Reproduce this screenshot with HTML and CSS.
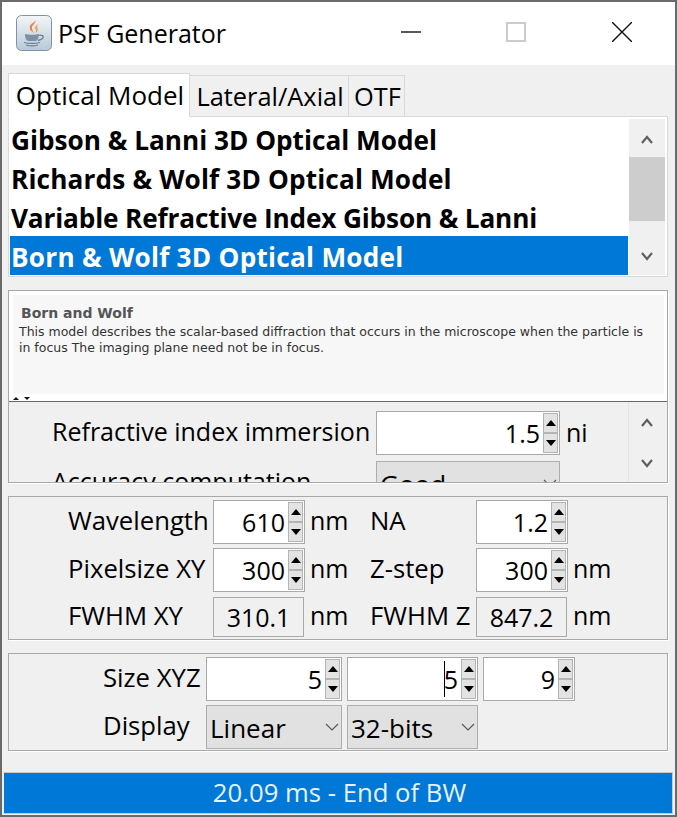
FILE: index.html
```html
<!DOCTYPE html>
<html lang="en">
<head>
    <meta charset="UTF-8">
    <title>PSF Generator</title>
    <link rel="stylesheet" href="styles.css">
</head>
<body>
<div class="window">

    <!-- Title bar -->
    <div class="titlebar">
        <svg class="appicon" viewBox="0 0 36 36">
            <defs>
                <linearGradient id="tile" x1="0" y1="0" x2="0" y2="1">
                    <stop offset="0" stop-color="#f4f6f8"/>
                    <stop offset="1" stop-color="#b9c9d8"/>
                </linearGradient>
            </defs>
            <rect x="0.5" y="0.5" width="35" height="35" rx="5" fill="url(#tile)" stroke="#7f93a6"/>
            <path d="M19 5c2 3-4 5-3 9 .4 2 1.500 3 2 4-3-2-5-4-4-7 1-3 5-3 5-6z" fill="#e8843a"/>
            <path d="M23 9c-3 1-4.500 3-3.500 5 .5 1 .8 2 .3 4 2.500-2 2.200-4 1.500-5.500-.6-1.300.2-2.500 1.700-3.500z" fill="#ee9a55"/>
            <path d="M9 19c3 1 11 1 14 0v1c-1 4-1 5-3 6h-8c-2-1-3-3-3-7z" fill="#7d91a3"/>
            <path d="M23 20.500c3-1 5 .5 4 2.500-.7 1.400-3 2-5 2.500" fill="none" stroke="#6a7f92" stroke-width="1.300"/>
            <path d="M8 27.500c4 1.200 12 1.200 16 0M10 30c3 .9 9 .9 12 0" fill="none" stroke="#6a7f92" stroke-width="1.300"/>
        </svg>
        <span class="title">PSF Generator</span>
        <div class="winbtns">
            <svg class="winbtn" viewBox="0 0 20 20"><path d="M0 10h20" stroke="#111" stroke-width="1.400"/></svg>
            <svg class="winbtn" viewBox="0 0 20 20"><rect x="1" y="1" width="18" height="18" fill="none" stroke="#ccc" stroke-width="2"/></svg>
            <svg class="winbtn winbtn-close" viewBox="0 0 20 20"><path d="M0 0l20 20M20 0L0 20" stroke="#111" stroke-width="1.400"/></svg>
        </div>
    </div>

    <div class="content">

        <!-- Tabs -->
        <div class="tabs">
            <div class="tab tab-active">Optical Model</div>
            <div class="tab tab-lateral">Lateral/Axial</div>
            <div class="tab tab-otf">OTF</div>
        </div>

        <!-- Model list -->
        <div class="listbox">
            <ul class="models">
                <li>Gibson &amp; Lanni 3D Optical Model</li>
                <li class="model-richards">Richards &amp; Wolf 3D Optical Model</li>
                <li class="model-variable">Variable Refractive Index Gibson &amp; Lanni</li>
                <li class="model-born selected">Born &amp; Wolf 3D Optical Model</li>
            </ul>
            <div class="scrollbar scrollbar-list">
                <svg class="chev" viewBox="0 0 12 9"><path d="M1 8l5-6 5 6" fill="none" stroke="#606060" stroke-width="2.200"/></svg>
                <div class="thumb"></div>
                <svg class="chev" viewBox="0 0 12 9"><path d="M1 1l5 6 5-6" fill="none" stroke="#606060" stroke-width="2.200"/></svg>
            </div>
        </div>

        <!-- Description and parameters split pane -->
        <div class="split">
            <div class="desc-wrap">
                <div class="desc">
                    <h4>Born and Wolf</h4>
                    <p>This model describes the scalar-based diffraction that occurs in the microscope when the particle is in focus The imaging plane need not be in focus.</p>
                </div>
                <div class="divider-arrows">
                    <svg viewBox="0 0 6 3"><path d="M3 0l3 3H0z" fill="#111"/></svg>
                    <svg viewBox="0 0 6 3"><path d="M0 0h6L3 3z" fill="#111"/></svg>
                </div>
            </div>
            <div class="params">
                <div class="params-view">
                    <div class="params-row">
                        <span class="params-label">Refractive index immersion</span>
                        <div class="spin spin-ni">
                            <span class="spin-value">1.5</span>
                            <div class="spin-btns">
                                <div class="spin-btn"><i class="tri-up"></i></div>
                                <div class="spin-btn"><i class="tri-down"></i></div>
                            </div>
                        </div>
                        <span class="unit">ni</span>
                    </div>
                    <div class="params-row">
                        <span class="params-label">Accuracy computation</span>
                        <div class="combo combo-accuracy">
                            <span>Good</span>
                            <svg class="combo-chev" viewBox="0 0 14 8"><path d="M1 1l6 6 6-6" fill="none" stroke="#555" stroke-width="1.100"/></svg>
                        </div>
                    </div>
                </div>
                <div class="scrollbar scrollbar-params">
                    <svg class="chev" viewBox="0 0 12 9"><path d="M1 8l5-6 5 6" fill="none" stroke="#606060" stroke-width="2.200"/></svg>
                    <svg class="chev" viewBox="0 0 12 9"><path d="M1 1l5 6 5-6" fill="none" stroke="#606060" stroke-width="2.200"/></svg>
                </div>
            </div>
        </div>

        <!-- Optics -->
        <div class="panel optics">
            <span class="lbl">Wavelength</span>
            <div class="spin">
                <span class="spin-value">610</span>
                <div class="spin-btns">
                    <div class="spin-btn"><i class="tri-up"></i></div>
                    <div class="spin-btn"><i class="tri-down"></i></div>
                </div>
            </div>
            <span class="unit">nm</span>
            <span class="lbl">NA</span>
            <div class="spin">
                <span class="spin-value">1.2</span>
                <div class="spin-btns">
                    <div class="spin-btn"><i class="tri-up"></i></div>
                    <div class="spin-btn"><i class="tri-down"></i></div>
                </div>
            </div>
            <span class="unit"></span>

            <span class="lbl">Pixelsize XY</span>
            <div class="spin">
                <span class="spin-value">300</span>
                <div class="spin-btns">
                    <div class="spin-btn"><i class="tri-up"></i></div>
                    <div class="spin-btn"><i class="tri-down"></i></div>
                </div>
            </div>
            <span class="unit">nm</span>
            <span class="lbl">Z-step</span>
            <div class="spin">
                <span class="spin-value">300</span>
                <div class="spin-btns">
                    <div class="spin-btn"><i class="tri-up"></i></div>
                    <div class="spin-btn"><i class="tri-down"></i></div>
                </div>
            </div>
            <span class="unit">nm</span>

            <span class="lbl">FWHM XY</span>
            <div class="readout">310.1</div>
            <span class="unit">nm</span>
            <span class="lbl">FWHM Z</span>
            <div class="readout">847.2</div>
            <span class="unit">nm</span>
        </div>

        <!-- Size and display -->
        <div class="panel sizes">
            <span class="lbl">Size XYZ</span>
            <div class="spin">
                <span class="spin-value">5</span>
                <div class="spin-btns">
                    <div class="spin-btn"><i class="tri-up"></i></div>
                    <div class="spin-btn"><i class="tri-down"></i></div>
                </div>
            </div>
            <div class="spin spin-second">
                <span class="spin-value caret">5</span>
                <div class="spin-btns">
                    <div class="spin-btn"><i class="tri-up"></i></div>
                    <div class="spin-btn"><i class="tri-down"></i></div>
                </div>
            </div>
            <div class="spin spin-third">
                <span class="spin-value">9</span>
                <div class="spin-btns">
                    <div class="spin-btn"><i class="tri-up"></i></div>
                    <div class="spin-btn"><i class="tri-down"></i></div>
                </div>
            </div>

            <span class="lbl">Display</span>
            <div class="combo">
                <span>Linear</span>
                <svg class="combo-chev" viewBox="0 0 14 8"><path d="M1 1l6 6 6-6" fill="none" stroke="#555" stroke-width="1.100"/></svg>
            </div>
            <div class="combo spin-second">
                <span>32-bits</span>
                <svg class="combo-chev" viewBox="0 0 14 8"><path d="M1 1l6 6 6-6" fill="none" stroke="#555" stroke-width="1.100"/></svg>
            </div>
        </div>

        <!-- Status -->
        <div class="status">20.09 ms - End of BW</div>
    </div>
</div>
</body>
</html>
```

FILE: styles.css
```css
* {
    box-sizing: border-box;
}
body {
    margin: 0;
    background-color: #6a6a6a;
    font-family: "Open Sans", "Noto Sans", sans-serif;
    color: #000;
}
.window {
    width: 673px;
    height: 813px;
    margin: 2px;
    display: flex;
    flex-direction: column;
    background-color: #f0f0f0;
}

/* title bar */
.titlebar {
    height: 63px;
    flex: none;
    background: #fff;
    display: flex;
    align-items: center;
    padding-left: 14px;
}
.appicon {
    width: 36px;
    height: 36px;
    margin-top: -2px;
}
.title {
    margin-left: 6px;
    font-size: 25px;
    margin-top: -1px;
}
.winbtns {
    margin-left: auto;
    display: flex;
    gap: 85px;
    padding-right: 43px;
    margin-top: -3px;
}
.winbtn {
    width: 20px;
    height: 20px;
}
.winbtn-close {
    margin-left: 1px;
}

.content {
    flex: 1;
    display: flex;
    flex-direction: column;
    padding: 7px 6px 0 6px;
    min-height: 0;
}

/* tabs */
.tabs {
    display: flex;
    align-items: flex-end;
    height: 44px;
    flex: none;
    position: relative;
    z-index: 1;
}
.tab {
    font-size: 25.400px;
    line-height: 40px;
    height: 41px;
    padding-left: 2px;
    border: 1px solid #d9d9d9;
    border-bottom: none;
    border-left: none;
    text-align: center;
    white-space: nowrap;
}
.tab-active {
    width: 182px;
    height: 44px;
    background: #fff;
    border-left: 1px solid #d9d9d9;
    font-size: 26px;
    line-height: 42px;
    border-bottom: 1px solid #fff;
    margin-bottom: -1px;
}
.tab-lateral {
    width: 159px;
}
.tab-otf {
    width: 56px;
}

/* list */
.listbox {
    width: 660px;
    height: 161px;
    flex: none;
    border: 1px solid #d9d9d9;
    background: #fff;
    display: flex;
    padding: 0 1px 1px 1px;
}
.models {
    list-style: none;
    margin: 0;
    padding: 2px 0 0 0;
    width: 618px;
    flex: none;
    font-weight: 700;
    font-size: 26.200px;
}
.models li {
    height: 39px;
    line-height: 43px;
    padding-left: 1px;
    white-space: nowrap;
}
.models .model-richards {
    letter-spacing: 0.15px;
}
.models .model-variable {
    letter-spacing: -0.15px;
}
.models .model-born {
    letter-spacing: 0.25px;
}
.models .selected {
    background: #0078d7;
    color: #fff;
}
.scrollbar {
    display: flex;
    flex-direction: column;
    align-items: center;
    background: #f0f0f0;
}
.scrollbar-list {
    width: 36px;
    margin-left: 1px;
    margin-top: 2px;
    padding-top: 16px;
}
.chev {
    width: 12px;
    height: 9px;
    flex: none;
}
.thumb {
    width: 36px;
    height: 64px;
    background: #cdcdcd;
    flex: none;
    margin: 13px 0 31px 0;
}

/* split pane */
.split {
    width: 660px;
    height: 193px;
    flex: none;
    margin-top: 13px;
    border: 1px solid #a9a9a9;
    box-shadow: 1px 1px 0 #fff;
    display: flex;
    flex-direction: column;
    overflow: hidden;
}
.desc-wrap {
    height: 111px;
    flex: none;
    background: #fff;
    border-bottom: 1px solid #666;
    position: relative;
    padding: 4px 3px 0 4px;
}
.desc {
    height: 99px;
    background: #f7f7f7;
    font-family: "DejaVu Sans", Verdana, sans-serif;
    padding: 7px 20px 0 6px;
    color: #333;
}
.desc h4 {
    margin: 0 0 0 2px;
    font-size: 14px;
    line-height: 22px;
    color: #555;
}
.desc p {
    margin: 0;
    font-size: 12.500px;
    line-height: 16px;
}
.divider-arrows {
    display: flex;
    gap: 5px;
    margin-top: 3px;
    height: 3px;
}
.divider-arrows svg {
    width: 6px;
    height: 3px;
}
.params {
    flex: 1;
    display: flex;
    min-height: 0;
    overflow: hidden;
}
.params-view {
    width: 619px;
    flex: none;
    padding-top: 9px;
}
.params-row {
    display: flex;
    align-items: center;
    height: 44px;
    margin-bottom: 6px;
}
.params-label {
    width: 367px;
    padding-left: 43px;
    margin-bottom: 4px;
    font-size: 25px;
    flex: none;
    white-space: nowrap;
}
.spin-ni {
    width: 184px;
    flex: none;
}
.params-row .unit {
    margin-left: 6px;
    margin-bottom: 2px;
}
.combo-accuracy {
    width: 184px;
    flex: none;
}
.scrollbar-params {
    width: 37px;
    flex: none;
    border-left: 1px solid #e4e4e4;
    padding-top: 16px;
    gap: 32px;
}

/* spinners */
.spin {
    height: 44px;
    border: 1px solid #a9a9a9;
    background: #fff;
    display: flex;
    align-items: stretch;
    padding: 1px;
}
.spin-value {
    flex: 1;
    text-align: right;
    font-size: 25px;
    line-height: 41px;
    padding-right: 3px;
}
.caret {
    position: relative;
}
.caret::before {
    content: "";
    position: absolute;
    top: 2px;
    bottom: 2px;
    right: 16px;
    width: 1px;
    background: #000;
}
.spin-btns {
    width: 15px;
    flex: none;
    display: flex;
    flex-direction: column;
    border: 1px solid #b4b4b4;
    background: #e3e3e3;
}
.spin-btn {
    flex: 1;
    display: flex;
    align-items: center;
    justify-content: center;
}
.spin-btn + .spin-btn {
    border-top: 2px solid #b4b4b4;
}
.tri-up {
    width: 0;
    height: 0;
    border-left: 5px solid transparent;
    border-right: 5px solid transparent;
    border-bottom: 6px solid #000;
}
.tri-down {
    width: 0;
    height: 0;
    border-left: 5px solid transparent;
    border-right: 5px solid transparent;
    border-top: 6px solid #000;
}
.unit {
    font-size: 25px;
    white-space: nowrap;
}

/* panels */
.panel {
    width: 660px;
    flex: none;
    border: 1px solid #a9a9a9;
    box-shadow: 1px 1px 0 #fff;
    display: grid;
    align-items: center;
}
.lbl {
    font-size: 25.700px;
    white-space: nowrap;
    margin-bottom: 3px;
}
.optics {
    margin-top: 13px;
    height: 144px;
    padding: 3px 0 0 59px;
    grid-template-columns: 145px 92px 65px 106px 92px 1fr;
    grid-template-rows: 44px 44px 41px;
    row-gap: 4px;
}
.optics .unit {
    padding-left: 5px;
    margin-bottom: 4px;
}
.readout {
    height: 40px;
    width: 91px;
    border: 1px solid #a9a9a9;
    background: #f0f0f0;
    font-size: 25px;
    line-height: 38px;
    text-align: center;
}
.sizes {
    margin-top: 13px;
    height: 98px;
    padding: 3px 0 0 94px;
    grid-template-columns: 103px 136px 136px 1fr;
    grid-template-rows: 44px 44px;
    row-gap: 4px;
}
.spin-second {
    width: 131px;
    margin-left: 5px;
}
.spin-third {
    width: 92px;
    margin-left: 5px;
}
.combo {
    height: 44px;
    border: 1px solid #adadad;
    background: #e1e1e1;
    display: flex;
    align-items: center;
    justify-content: space-between;
    padding: 0 2px 0 3px;
    font-size: 26px;
}
.combo-chev {
    width: 14px;
    height: 8px;
    flex: none;
}
.combo span {
    margin-top: 2px;
}

/* status bar */
.status {
    margin: 21px 0 0 -5px;
    padding-left: 3px;
    width: 670px;
    height: 42px;
    flex: none;
    border: 1px solid #c8c8c8;
    border-left-color: #f0f0f0;
    background: #0078d7;
    color: #e8f2fb;
    text-align: center;
    font-size: 25.700px;
    line-height: 40px;
}
```
